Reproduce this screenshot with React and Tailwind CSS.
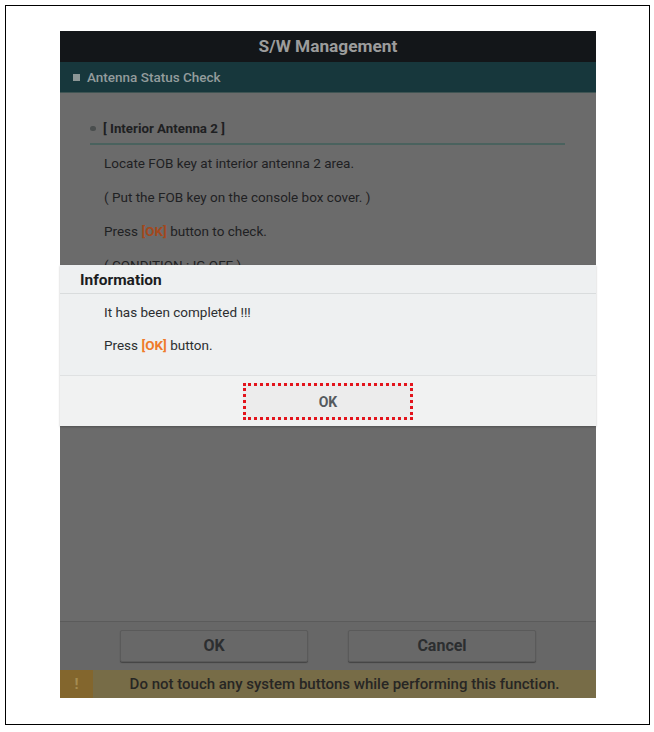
import React from 'react';

// ── Background screen lines (dimmed behind the dialog) ───────────────────────
const lines = [
  { key: 'l1', text: 'Locate FOB key at interior antenna 2 area.' },
  { key: 'l2', text: '( Put the FOB key on the console box cover. )' },
  { key: 'l3', ok: true },
  { key: 'l4', text: '( CONDITION : IG OFF )' },
];

const FooterButton = ({ label }) => (
  <button className="h-[32px] w-[188px] rounded-[2px] border border-[#5a5a5a] bg-[#686868] shadow-[0_1px_1px_rgba(0,0,0,0.35)] text-[16px] font-bold text-[#2c2e30]">
    {label}
  </button>
);

export default function App() {
  return (
    <div className="min-h-screen bg-white p-[5px] font-['Roboto','Liberation_Sans',sans-serif]">
      <div className="w-[645px] h-[720px] border border-black pl-[54px] pt-[25px]">
        {/* Tablet screen */}
        <div className="relative w-[536px] h-[667px] flex flex-col bg-[#6b6b6b]">
          {/* Title */}
          <div className="h-[31px] flex items-center justify-center bg-[#131619] text-[17.3px] font-bold text-[#9c9c9c]">
            S/W Management
          </div>

          {/* Section bar */}
          <div className="h-[31px] flex items-center gap-[7px] pl-[13px] bg-[#17373c] border-b border-[#3f5453]">
            <span className="w-[7px] h-[7px] bg-[#8c9696]" />
            <span className="text-[13.5px] font-medium text-[#939c9c]">Antenna Status Check</span>
          </div>

          {/* Content */}
          <div className="flex-1 pl-[30px] pr-[31px] pt-[26px]">
            <div className="flex items-center gap-[7px] pb-[4px] border-b-2 border-[#4a625e] text-[13.3px] font-bold text-[#1e2022]">
              <span className="w-[6px] h-[5px] rounded-full bg-[#4a4e4e]" />
              <span>[ Interior Antenna 2 ]</span>
            </div>
            <div className="pl-[14px] pt-[9px] flex flex-col gap-[15px] text-[13.5px] text-[#1f2123]">
              {lines.map((l) => (
                <p key={l.key} className="h-[19px] leading-[19px]">
                  {l.ok ? (
                    <>Press <span className="font-bold text-[#a3481c]">[OK]</span> button to check.</>
                  ) : (
                    l.text
                  )}
                </p>
              ))}
            </div>
          </div>

          {/* Footer buttons */}
          <div className="h-[49px] flex items-start justify-center gap-[40px] pt-[8px] border-t border-[#5b5b5b] bg-[#676767]">
            <FooterButton label="OK" />
            <FooterButton label="Cancel" />
          </div>

          {/* Warning bar */}
          <div className="h-[28px] flex bg-[#776c47]">
            <div className="w-[33px] flex items-center justify-center bg-[#83662d] text-[15px] font-bold text-[#a58c52]">!</div>
            <div className="flex-1 flex items-center justify-center text-[15px] font-medium text-[#272624]">
              Do not touch any system buttons while performing this function.
            </div>
          </div>

          {/* Information dialog */}
          <div className="absolute left-0 right-0 top-[234px] bg-[#eef0f1] shadow-[0_1px_2px_rgba(0,0,0,0.25)]">
            <div className="h-[29px] flex items-center pl-[20px] pt-[3px] border-b border-[#d9dcdd] text-[15.5px] font-bold text-[#1b1c1e]">
              Information
            </div>
            <div className="h-[82px] pl-[44px] pt-[9px] flex flex-col gap-[14px] text-[13.5px] text-[#2c2e30] border-b border-[#dfe1e2]">
              <p className="h-[19px] leading-[19px]">It has been completed !!!</p>
              <p className="h-[19px] leading-[19px]">
                Press <span className="font-bold text-[#ef7b2a]">[OK]</span> button.
              </p>
            </div>
            <div className="h-[50px] flex items-start justify-center pt-[7px] bg-[#f1f2f2]">
              <button className="w-[170px] h-[37px] pt-[2px] border-[3px] border-dotted border-[#e3141c] bg-[#ececec] text-[14px] font-bold text-[#555a5e]">
                OK
              </button>
            </div>
          </div>
        </div>
      </div>
    </div>
  );
}
